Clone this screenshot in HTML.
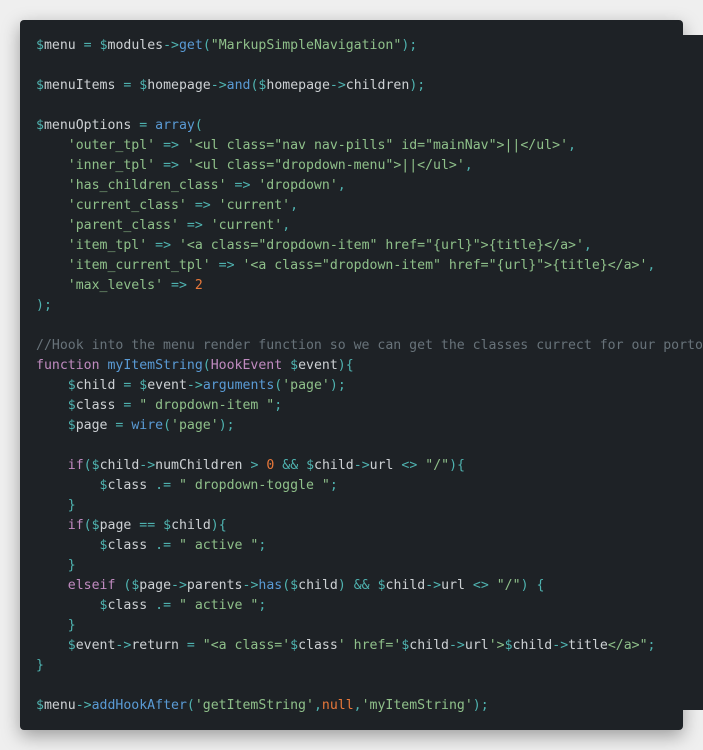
<!DOCTYPE html>
<html><head><meta charset="utf-8"><style>
html,body{margin:0;padding:0;background:#efefef;width:703px;height:750px;overflow:hidden;position:relative}
.box{position:absolute;left:20px;top:20px;width:663px;height:710px;background:#1e2226;border-radius:4px;box-shadow:0 6px 18px rgba(0,0,0,.35)}
.ext{position:absolute;left:683px;top:35px;width:20px;height:675px;background:#1e2226}
pre{position:absolute;left:36px;top:36px;margin:0;font-family:"DejaVu Sans Mono","Liberation Mono",monospace;font-size:13.2px;line-height:20px;color:#cdd1d4;white-space:pre}
.v{color:#4fb3b0}.s{color:#8fc08a}.f{color:#5a9bd5}.k{color:#c08bc0}.n{color:#e8783a}.c{color:#68737a}.p{color:#4fb3b0}
</style></head><body>
<div class="box"></div><div class="ext"></div>
<pre><span class="v">$</span>menu <span class="p">=</span> <span class="v">$</span>modules<span class="p">-&gt;</span><span class="f">get</span><span class="p">(</span><span class="s">"MarkupSimpleNavigation"</span><span class="p">);</span>

<span class="v">$</span>menuItems <span class="p">=</span> <span class="v">$</span>homepage<span class="p">-&gt;</span><span class="f">and</span><span class="p">(</span><span class="v">$</span>homepage<span class="p">-&gt;</span>children<span class="p">);</span>

<span class="v">$</span>menuOptions <span class="p">=</span> <span class="f">array</span><span class="p">(</span>
    <span class="s">'outer_tpl'</span> <span class="p">=&gt;</span> <span class="s">'&lt;ul class="nav nav-pills" id="mainNav"&gt;||&lt;/ul&gt;'</span><span class="p">,</span>
    <span class="s">'inner_tpl'</span> <span class="p">=&gt;</span> <span class="s">'&lt;ul class="dropdown-menu"&gt;||&lt;/ul&gt;'</span><span class="p">,</span>
    <span class="s">'has_children_class'</span> <span class="p">=&gt;</span> <span class="s">'dropdown'</span><span class="p">,</span>
    <span class="s">'current_class'</span> <span class="p">=&gt;</span> <span class="s">'current'</span><span class="p">,</span>
    <span class="s">'parent_class'</span> <span class="p">=&gt;</span> <span class="s">'current'</span><span class="p">,</span>
    <span class="s">'item_tpl'</span> <span class="p">=&gt;</span> <span class="s">'&lt;a class="dropdown-item" href="{url}"&gt;{title}&lt;/a&gt;'</span><span class="p">,</span>
    <span class="s">'item_current_tpl'</span> <span class="p">=&gt;</span> <span class="s">'&lt;a class="dropdown-item" href="{url}"&gt;{title}&lt;/a&gt;'</span><span class="p">,</span>
    <span class="s">'max_levels'</span> <span class="p">=&gt;</span> <span class="n">2</span>
<span class="p">);</span>

<span class="c">//Hook into the menu render function so we can get the classes currect for our porto</span>
<span class="k">function</span> <span class="f">myItemString</span><span class="p">(</span><span class="k">HookEvent</span> <span class="v">$</span>event<span class="p">){</span>
    <span class="v">$</span>child <span class="p">=</span> <span class="v">$</span>event<span class="p">-&gt;</span><span class="f">arguments</span><span class="p">(</span><span class="s">'page'</span><span class="p">);</span>
    <span class="v">$</span>class <span class="p">=</span> <span class="s">" dropdown-item "</span><span class="p">;</span>
    <span class="v">$</span>page <span class="p">=</span> <span class="f">wire</span><span class="p">(</span><span class="s">'page'</span><span class="p">);</span>

    <span class="k">if</span><span class="p">(</span><span class="v">$</span>child<span class="p">-&gt;</span>numChildren <span class="p">&gt;</span> <span class="n">0</span> <span class="p">&amp;&amp;</span> <span class="v">$</span>child<span class="p">-&gt;</span>url <span class="p">&lt;&gt;</span> <span class="s">"/"</span><span class="p">){</span>
        <span class="v">$</span>class <span class="p">.=</span> <span class="s">" dropdown-toggle "</span><span class="p">;</span>
    <span class="p">}</span>
    <span class="k">if</span><span class="p">(</span><span class="v">$</span>page <span class="p">==</span> <span class="v">$</span>child<span class="p">){</span>
        <span class="v">$</span>class <span class="p">.=</span> <span class="s">" active "</span><span class="p">;</span>
    <span class="p">}</span>
    <span class="k">elseif</span> <span class="p">(</span><span class="v">$</span>page<span class="p">-&gt;</span>parents<span class="p">-&gt;</span><span class="f">has</span><span class="p">(</span><span class="v">$</span>child<span class="p">)</span> <span class="p">&amp;&amp;</span> <span class="v">$</span>child<span class="p">-&gt;</span>url <span class="p">&lt;&gt;</span> <span class="s">"/"</span><span class="p">) {</span>
        <span class="v">$</span>class <span class="p">.=</span> <span class="s">" active "</span><span class="p">;</span>
    <span class="p">}</span>
    <span class="v">$</span>event<span class="p">-&gt;</span>return <span class="p">=</span> <span class="s">"&lt;a class='</span><span class="v">$</span>class<span class="s">' href='</span><span class="v">$</span>child<span class="p">-&gt;</span>url<span class="s">'&gt;</span><span class="v">$</span>child<span class="p">-&gt;</span>title<span class="s">&lt;/a&gt;"</span><span class="p">;</span>
<span class="p">}</span>

<span class="v">$</span>menu<span class="p">-&gt;</span><span class="f">addHookAfter</span><span class="p">(</span><span class="s">'getItemString'</span><span class="p">,</span><span class="n">null</span><span class="p">,</span><span class="s">'myItemString'</span><span class="p">);</span></pre>
</body></html>
